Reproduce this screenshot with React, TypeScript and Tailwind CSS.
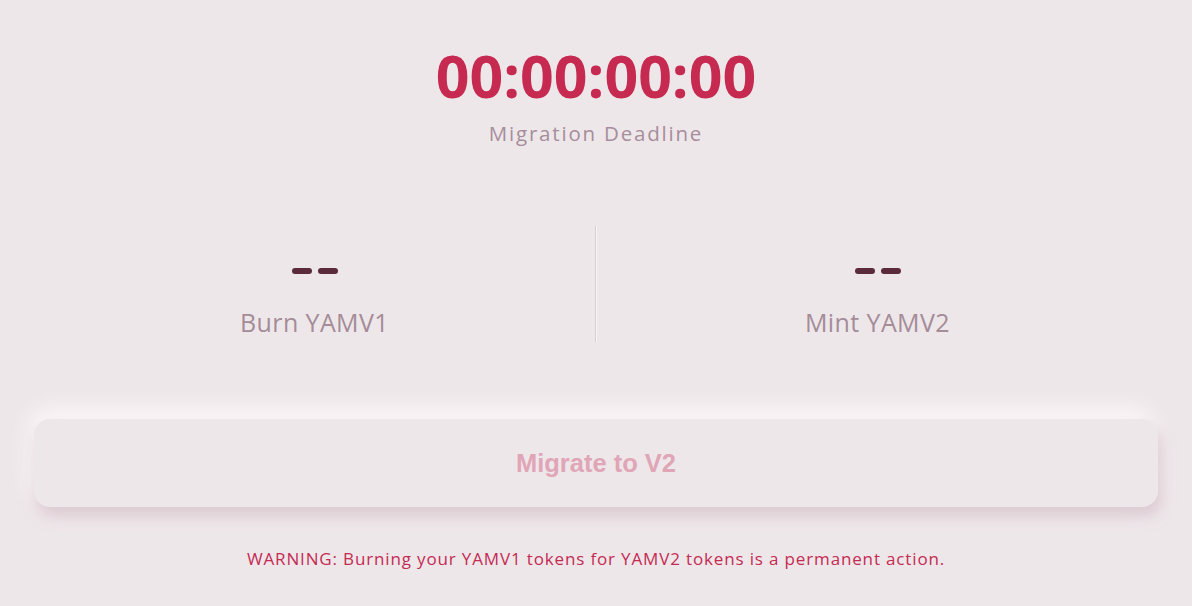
import React from "react";

export default function App() {
  return (
    <div className="w-[1192px] h-[606px] bg-[#eee7ea] overflow-hidden flex flex-col items-center px-[34px]" style={{ fontFamily: "'Open Sans', 'Noto Sans', sans-serif" }}>
      <div className="mt-[43px] text-[59px] leading-[64px] font-bold text-[#c62a50]">00:00:00:00</div>
      <div className="mt-[12px] text-[20.5px] leading-[28px] tracking-[1.8px] text-[#a68d9a]">Migration Deadline</div>
      <div className="mt-[79px] w-full flex h-[116px]">
        <div className="flex-1 flex flex-col items-center pt-[26px]">
          <div className="flex gap-[6px] h-[38px] items-center">
            <span className="block w-[20px] h-[6px] rounded-full bg-[#5b2a3b]" />
            <span className="block w-[20px] h-[6px] rounded-full bg-[#5b2a3b]" />
          </div>
          <div className="mt-[17px] text-[25px] leading-[30px] tracking-[0.4px] text-[#a48c98]">Burn YAMV1</div>
        </div>
        <div className="flex">
          <div className="w-px bg-[#d9ced3]" />
          <div className="w-px bg-[#f8f3f5]" />
        </div>
        <div className="flex-1 flex flex-col items-center pt-[26px]">
          <div className="flex gap-[6px] h-[38px] items-center">
            <span className="block w-[20px] h-[6px] rounded-full bg-[#5b2a3b]" />
            <span className="block w-[20px] h-[6px] rounded-full bg-[#5b2a3b]" />
          </div>
          <div className="mt-[17px] text-[25px] leading-[30px] tracking-[0.4px] text-[#a48c98]">Mint YAMV2</div>
        </div>
      </div>
      <button className="mt-[77px] w-full h-[88px] rounded-[16px] bg-[#eee7ea] flex items-center justify-center shadow-[3px_9px_14px_rgba(205,178,189,0.55),-4px_-10px_22px_rgba(255,251,253,0.8)]">
        <span className="text-[25.5px] font-bold text-[#e0a5b6]" style={{ fontFamily: "'Liberation Sans', Arial, sans-serif" }}>Migrate to V2</span>
      </button>
      <div className="mt-[40px] text-[17px] leading-[24px] tracking-[0.85px] text-[#c42b52]">WARNING: Burning your YAMV1 tokens for YAMV2 tokens is a permanent action.</div>
    </div>
  );
}
